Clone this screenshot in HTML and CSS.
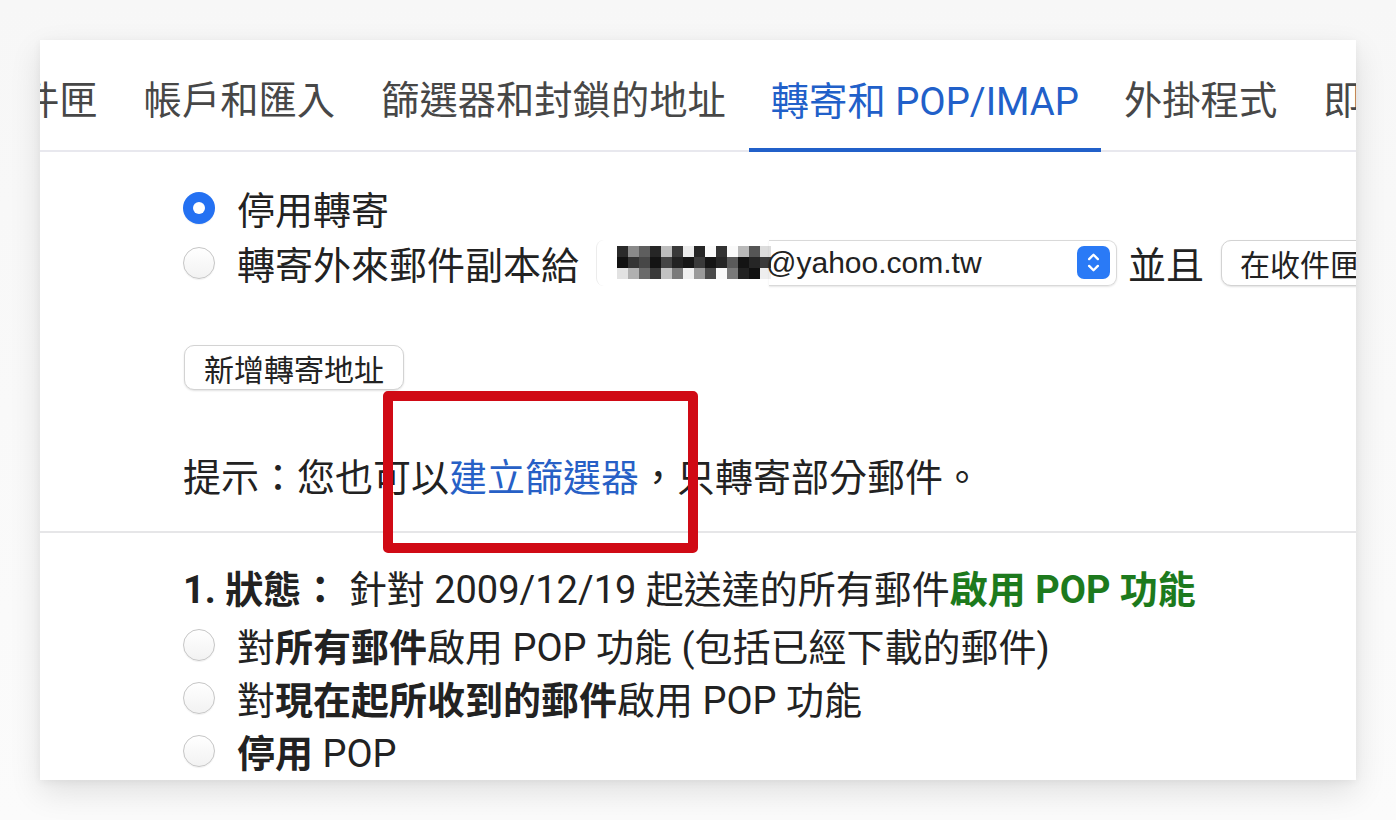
FILE: index.html
```html
<!DOCTYPE html>
<html lang="zh-Hant">
<head>
<meta charset="utf-8">
<title>轉寄和 POP/IMAP</title>
<link rel="stylesheet" href="styles.css">
</head>
<body>
<div class="stage">
  <div class="card">
    <nav class="tabs">
      <div class="tab">件匣</div>
      <div class="tab">帳戶和匯入</div>
      <div class="tab">篩選器和封鎖的地址</div>
      <div class="tab active">轉寄和 POP/IMAP</div>
      <div class="tab">外掛程式</div>
      <div class="tab">即時通訊和視訊會議</div>
    </nav>

    <section class="forward">
      <div class="row">
        <span class="radio checked"></span>
        <span class="label">停用轉寄</span>
      </div>
      <div class="row">
        <span class="radio"></span>
        <span class="label">轉寄外來郵件副本給</span>
        <div class="select">
          <div class="sel-left">
            <div class="mosaic">
              <i style="background:#2a2a2a"></i><i style="background:#8a8a8a"></i><i style="background:#5e5e5e"></i><i style="background:#262626"></i><i style="background:#bdbdbd"></i><i style="background:#3a3a3a"></i><i style="background:#ececec"></i><i style="background:#262626"></i><i style="background:#fafafa"></i><i style="background:#333"></i><i style="background:#fafafa"></i><i style="background:#b9b9b9"></i><i style="background:#555"></i><i style="background:#dcdcdc"></i>
              <i style="background:#111"></i><i style="background:#343434"></i><i style="background:#474747"></i><i style="background:#141414"></i><i style="background:#454545"></i><i style="background:#222"></i><i style="background:#161616"></i><i style="background:#3a3a3a"></i><i style="background:#151515"></i><i style="background:#262626"></i><i style="background:#5a5a5a"></i><i style="background:#141414"></i><i style="background:#262626"></i><i style="background:#3b3b3b"></i>
              <i style="background:#e2e2e2"></i><i style="background:#b0b0b0"></i><i style="background:#6a6a6a"></i><i style="background:#3a3a3a"></i><i style="background:#c2c2c2"></i><i style="background:#7a7a7a"></i><i style="background:#efefef"></i><i style="background:#9a9a9a"></i><i style="background:#4a4a4a"></i><i style="background:#fafafa"></i><i style="background:#7a7a7a"></i><i style="background:#222"></i><i style="background:#111"></i><i style="background:#eeeeee"></i>
            </div>
          </div>
          <div class="sel-right">
            <span class="email">@yahoo.com.tw</span>
            <span class="stepper">
              <svg viewBox="0 0 34 34" width="33" height="33"><path d="M12.5 13.5 17 9l4.5 4.5M12.5 20.5 17 25l4.5-4.5" fill="none" stroke="#fff" stroke-width="2.4" stroke-linecap="round" stroke-linejoin="round"/></svg>
            </span>
          </div>
        </div>
        <span class="label and">並且</span>
        <div class="btn btn-keep">在收件匣中保留 Gmail 副本</div>
      </div>
      <div class="btn btn-add">新增轉寄地址</div>
      <p class="hint">提示：您也可以<a class="link">建立篩選器</a>，只轉寄部分郵件。</p>
    </section>

    <div class="divider"></div>

    <section class="pop">
      <div class="status"><b>1. 狀態：</b> 針對 2009/12/19 起送達的所有郵件<b class="green">啟用 POP 功能</b></div>
      <div class="row tight">
        <span class="radio"></span>
        <span class="label">對<b>所有郵件</b>啟用 POP 功能 (包括已經下載的郵件)</span>
      </div>
      <div class="row tight">
        <span class="radio"></span>
        <span class="label">對<b>現在起所收到的郵件</b>啟用 POP 功能</span>
      </div>
      <div class="row tight">
        <span class="radio"></span>
        <span class="label"><b>停用</b> POP</span>
      </div>
    </section>

    <div class="highlight"></div>
  </div>
</div>
</body>
</html>
```

FILE: styles.css
```css
* { box-sizing: border-box; }

html, body {
  margin: 0;
  padding: 0;
  background: #ffffff;
  overflow: hidden;
}

body {
  font-family: Roboto, "Noto Sans CJK TC", sans-serif;
  color: #222;
}

.stage {
  width: 1396px;
  height: 820px;
  padding: 40px;
  background: linear-gradient(#f7f7f7, #fbfbfb);
}

.card {
  position: relative;
  width: 1316px;
  height: 740px;
  background: #fff;
  overflow: hidden;
  box-shadow: 0 12px 30px rgba(0, 0, 0, 0.11), 0 2px 8px rgba(0, 0, 0, 0.05);
}

/* Tabs */
.tabs {
  display: flex;
  margin-left: -42px;
  height: 112px;
  border-bottom: 2px solid #e8e8ee;
  white-space: nowrap;
}

.tab {
  display: flex;
  align-items: center;
  padding: 5px 23px 0;
  font-size: 38.3px;
  color: #474747;
  flex: none;
}

.tab.active {
  color: #2160c9;
  border-bottom: 4px solid #2160c9;
  margin-bottom: -2px;
  padding-left: 22px;
  padding-right: 22px;
  padding-top: 9px;
}

/* Forwarding section */
.forward {
  padding: 28px 0 0 143px;
}

.row {
  display: flex;
  align-items: center;
  height: 55px;
  white-space: nowrap;
  font-size: 38px;
}

.row.tight {
  height: 53px;
}

.radio {
  flex: none;
  width: 32px;
  height: 32px;
  border-radius: 50%;
  border: 1.5px solid #c6c6c6;
  background: linear-gradient(#ffffff, #f2f2f2);
  box-shadow: 0 1px 1px rgba(0, 0, 0, 0.06);
  margin-right: 22px;
}

.radio.checked {
  border: none;
  background: #2471f2;
  display: flex;
  align-items: center;
  justify-content: center;
}

.radio.checked::after {
  content: "";
  width: 12px;
  height: 12px;
  border-radius: 50%;
  background: #fff;
}

.label b {
  font-weight: 700;
}

.select {
  display: flex;
  margin-left: 17px;
  height: 46px;
  width: 521px;
  flex: none;
}

.sel-left {
  width: 173px;
  display: flex;
  align-items: center;
  padding-left: 20px;
  border-left: 1px solid #ececec;
  border-radius: 8px 0 0 8px;
}

.mosaic {
  display: grid;
  grid-template-columns: repeat(14, 11px);
  grid-auto-rows: 11px;
}

.mosaic i {
  display: block;
}

.sel-right {
  flex: 1;
  display: flex;
  align-items: center;
  justify-content: space-between;
  border: 1px solid #d9d9d9;
  border-left: none;
  border-radius: 0 9px 9px 0;
  box-shadow: 0 1px 2px rgba(0, 0, 0, 0.10);
  padding-right: 6px;
}

.email {
  font-family: "Liberation Sans", Arial, sans-serif;
  font-size: 30px;
  color: #222;
  margin-left: -3px;
}

.stepper {
  width: 33px;
  height: 33px;
  border-radius: 7px;
  background: #2a7af6;
  display: flex;
}

.and {
  margin-left: 11px;
}

.btn {
  display: inline-flex;
  align-items: center;
  height: 46px;
  padding: 0 18px;
  border: 1px solid #d3d3d3;
  border-radius: 10px;
  background: #fff;
  box-shadow: 0 1px 2px rgba(0, 0, 0, 0.12);
  font-size: 30px;
  color: #222;
  white-space: nowrap;
  flex: none;
}

.btn-keep {
  margin-left: 17px;
}

.btn-add {
  margin-top: 55px;
  height: 45px;
  padding: 0 19px;
  margin-left: 1px;
}

.hint {
  margin: 61px 0 0;
  font-size: 38px;
  line-height: 55px;
  white-space: nowrap;
}

.link {
  color: #2760c6;
}

.divider {
  margin-top: 25px;
  height: 2px;
  background: #e6e6e8;
}

/* POP section */
.pop {
  padding: 30px 0 0 143px;
}

.status {
  font-size: 38px;
  height: 55px;
  line-height: 55px;
  white-space: nowrap;
}

.status b {
  font-weight: 700;
}

.green {
  color: #1d7a1d;
}

/* Annotation overlay */
.highlight {
  position: absolute;
  left: 343px;
  top: 351px;
  width: 315px;
  height: 162px;
  border: 10px solid #d00a15;
  border-radius: 5px;
}
```
